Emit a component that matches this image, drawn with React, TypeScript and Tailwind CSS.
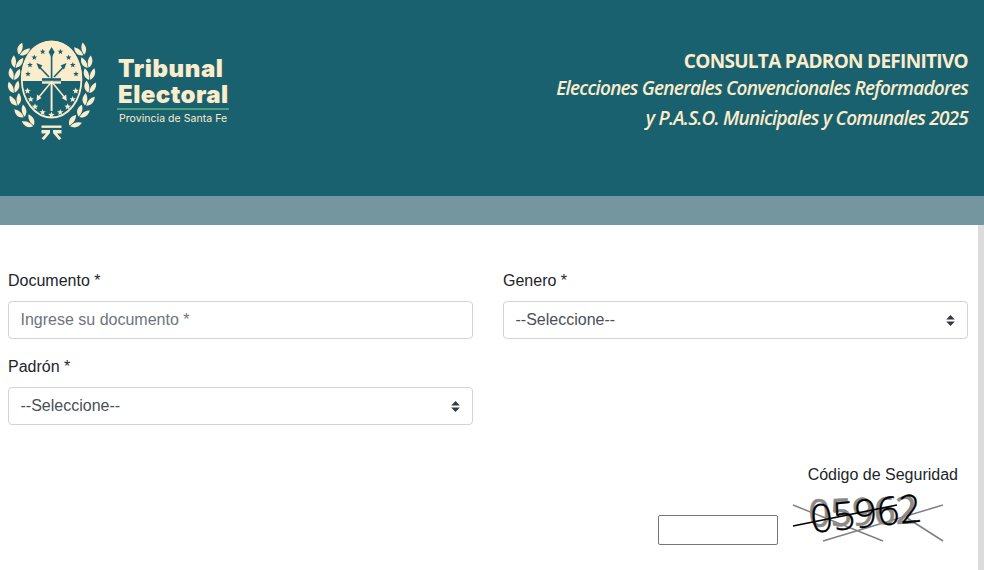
import React from "react";

const CREAM = "#fbeccb";
const TEAL = "#1a616f";

function starPts(cx: number, cy: number, r: number) {
  const p: string[] = [];
  for (let i = 0; i < 10; i++) {
    const a = -Math.PI / 2 + (i * Math.PI) / 5;
    const rr = i % 2 === 0 ? r : r * 0.42;
    p.push(`${(cx + rr * Math.cos(a)).toFixed(2)},${(cy + rr * Math.sin(a)).toFixed(2)}`);
  }
  return p.join(" ");
}

const CX = 51.6;
const topStars: [number, number][] = [
  [42.7, 51.7], [60.4, 51.7], [34.3, 57.5], [68.6, 57.5], [30, 65], [72.8, 65], [28, 74], [76, 74],
];
const bottomStars: [number, number][] = [
  [27.5, 91], [75.7, 91], [30.7, 99.3], [72.7, 99.3], [35, 106.7], [67.7, 106.7], [42.6, 112.4], [60.2, 112.4], [51.4, 115],
];
const leaves: [number, number, number][] = [
  [22.5, 50, 32], [16.5, 62, 14], [14, 74, 3], [13.5, 87, -8], [15.5, 100, -20], [21, 112, -32], [29, 122, -50],
];

function LeafPair({ x, y, rot }: { x: number; y: number; rot: number }) {
  return (
    <g transform={`translate(${x} ${y}) rotate(${rot}) scale(1.08)`}>
      <path d="M-0.5 5.5 C-5.5 3 -6 -1 -3.8 -5.5 C-0.5 -2.5 0.5 1 -0.5 5.5Z" fill={CREAM} />
      <path d="M0.5 5.5 C5 3.5 6.4 0 5.2 -5 C1.8 -3 -0.2 1 0.5 5.5Z" fill={CREAM} />
    </g>
  );
}

function Logo() {
  return (
    <svg width="110" height="110" viewBox="0 36 110 110" className="shrink-0">
      <path d={`M21 81 C21 55 34 41 ${CX} 41 C69 41 82 55 82 81 Z`} fill={CREAM} />
      <ellipse cx={CX} cy="79.5" rx="29.8" ry="38" fill="none" stroke={CREAM} strokeWidth="1.8" />
      <g stroke={TEAL} fill={TEAL}>
        <path d={`M${CX} 54 V80`} strokeWidth="1.6" />
        <path d={`M${CX} 47 L54.6 52 L${CX} 57.5 L48.6 52Z`} stroke="none" />
        <path d="M49 77 L39 66.5" strokeWidth="1.6" />
        <path d="M54 77 L64 66.5" strokeWidth="1.6" />
        <path d="M36.5 63 L42.5 65.5 L39 69.5 Z" stroke="none" />
        <path d="M66.5 63 L60.5 65.5 L64 69.5 Z" stroke="none" />
        <path d="M42 79.5 H61" strokeWidth="2.6" />
      </g>
      <g stroke={CREAM} fill={CREAM}>
        <path d={`M${CX} 81 V111`} strokeWidth="2" />
        <path d="M50.5 83 L39 97" strokeWidth="1.5" />
        <path d="M52.7 83 L64.2 97" strokeWidth="1.5" />
        <path d="M36.5 101 L37 94.5 L41.5 98Z" stroke="none" />
        <path d="M66.7 101 L66.2 94.5 L61.7 98Z" stroke="none" />
        <path d="M42 82.5 H61" strokeWidth="2.4" />
      </g>
      {topStars.map(([x, y], i) => (
        <polygon key={i} points={starPts(x, y, 3)} fill={TEAL} />
      ))}
      {bottomStars.map(([x, y], i) => (
        <polygon key={i} points={starPts(x, y, 3.4)} fill={CREAM} />
      ))}
      {leaves.map(([x, y, r], i) => (
        <React.Fragment key={i}>
          <LeafPair x={x} y={y} rot={r} />
          <LeafPair x={2 * CX - x} y={y} rot={-r} />
        </React.Fragment>
      ))}
      <g fill={CREAM}>
        <rect x="41.5" y="125.5" width="20" height="2.4" />
        <path d="M41.5 130 H50 V133 L44 140 L41.5 138.5 L46 133.5 H41.5Z" />
        <path d="M61.5 130 H53 V133 L59 140 L61.5 138.5 L57 133.5 H61.5Z" />
      </g>
    </svg>
  );
}

function Select() {
  return (
    <div className="h-[38px] border border-[#ced4da] rounded-[4px] bg-white flex items-center justify-between pl-[11.5px] pr-[12px] text-[16px] text-[#495057]">
      <span>--Seleccione--</span>
      <svg width="9" height="11" viewBox="0 0 9 11">
        <path d="M4.5 0 L8.8 4.4 H0.2Z M4.5 11 L0.2 6.6 H8.8Z" fill="#343a40" />
      </svg>
    </div>
  );
}

function Field({ label, children }: { label: string; children: React.ReactNode }) {
  return (
    <div className="w-[465px] mb-4">
      <label className="block h-6 leading-6 mb-2 text-[16px] text-[#212529]">{label}</label>
      {children}
    </div>
  );
}

function Captcha() {
  return (
    <svg width="152" height="56" viewBox="0 0 152 56" className="block overflow-visible">
      <g stroke="#808080" strokeWidth="1.5" fill="none">
        <line x1="1" y1="16" x2="91" y2="52" />
        <line x1="31" y1="52" x2="151" y2="16" />
        <line x1="115" y1="29" x2="151" y2="52" />
      </g>
      <text x="17" y="38" transform="rotate(-2 17 38)" fontFamily="'Open Sans', sans-serif" fontSize="38" fill="#8a8a8a" stroke="#8a8a8a" strokeWidth="0.6">05962</text>
      <text x="20" y="44" transform="rotate(-6 20 44)" fontFamily="'Open Sans', sans-serif" fontSize="39" fontWeight="300" fill="#000" stroke="#000" strokeWidth="0.3">05962</text>
      <line x1="1" y1="37" x2="105" y2="16" stroke="#000" strokeWidth="1.6" />
    </svg>
  );
}

export default function App() {
  return (
    <div className="w-[984px] h-[570px] overflow-hidden flex flex-col bg-white font-['Liberation_Sans',Arial,sans-serif]">
      <header className="h-[196px] shrink-0 bg-[#1a616f] flex justify-between pt-[36px] pr-4 pl-0">
        <div className="flex items-start">
          <Logo />
          <div className="ml-2 pt-[20px] w-[111px] font-['Inter',sans-serif] text-[#fbeccb]">
            <div className="text-[24px] leading-[26px] font-black tracking-[0.6px]">Tribunal</div>
            <div className="text-[24px] leading-[26px] font-black tracking-[0.45px]">Electoral</div>
            <div className="h-[2px] bg-[#4f9f7a] mt-0 -ml-px"></div>
            <div className="text-[10.5px] leading-[12px] mt-[3px] ml-px whitespace-nowrap tracking-[0.05px]">Provincia de Santa Fe</div>
          </div>
        </div>
        <div className="text-right text-[#fbeccb] font-['Open_Sans',sans-serif] whitespace-nowrap pt-[13px]">
          <div className="text-[19px] leading-[24px] font-bold tracking-[-0.7px]">CONSULTA PADRON DEFINITIVO</div>
          <div className="text-[19px] leading-[30px] italic font-semibold tracking-[-0.77px]">Elecciones Generales Convencionales Reformadores</div>
          <div className="text-[19px] leading-[30px] italic font-semibold tracking-[-0.77px]">y P.A.S.O. Municipales y Comunales 2025</div>
        </div>
      </header>
      <div className="h-[29px] shrink-0 bg-[#74969f]"></div>
      <div className="flex-1 flex min-h-0">
        <main className="flex-1 pl-2 pr-[10px] pt-[44px]">
          <div className="flex justify-between">
            <Field label="Documento *">
              <input
                placeholder="Ingrese su documento *"
                className="w-full h-[38px] border border-[#ced4da] rounded-[4px] pl-[11.5px] pr-3 text-[16px] text-[#495057] placeholder:text-[#6c757d] outline-none"
              />
            </Field>
            <Field label="Genero *">
              <Select />
            </Field>
          </div>
          <Field label="Padrón *">
            <Select />
          </Field>
          <div className="flex justify-end mt-[41px] pr-[10px] text-[16px] text-[#212529] leading-[18px]">
            <div className="flex flex-col items-end">
              <div className="whitespace-nowrap">Código de Seguridad</div>
              <div className="flex items-end mt-[5px] pr-[14px]">
                <input className="w-[120px] h-[30px] border border-[#767676] rounded-[2px] mr-[14px] outline-none" />
                <Captcha />
              </div>
            </div>
          </div>
        </main>
        <div className="w-[6px] shrink-0 bg-[#dcdcdc]"></div>
      </div>
    </div>
  );
}
